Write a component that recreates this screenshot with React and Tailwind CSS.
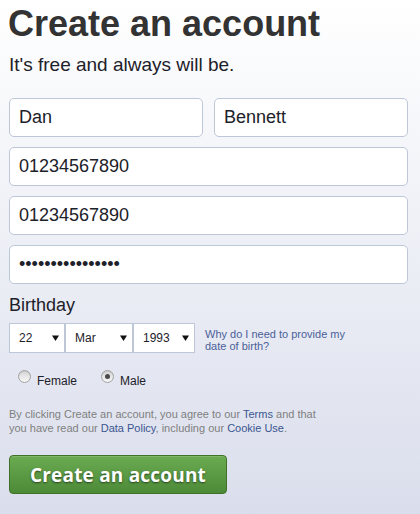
import React from "react";

function Field({ children, className = "" }) {
  return (
    <div
      className={`h-[39px] flex items-center rounded-[5px] border border-[#bdc7d8] bg-white pl-[9px] text-[18px] leading-[20px] text-[#1d2129] ${className}`}
    >
      <span className="pb-[1px]">{children}</span>
    </div>
  );
}

function Arrow() {
  return (
    <svg width="7" height="6" viewBox="0 0 7 6" className="shrink-0">
      <path d="M0 0.5 L7 0.5 L3.5 6 Z" fill="#111" />
    </svg>
  );
}

function Select({ value, width }) {
  return (
    <div
      className={`h-[30px] ${width} flex items-center justify-between border border-[#bdc7d8] bg-white pl-[9px] pr-[5px] text-[12px] text-[#1d2129]`}
    >
      <span>{value}</span>
      <Arrow />
    </div>
  );
}

function Radio({ checked }) {
  return (
    <div className="w-[13px] h-[13px] rounded-full border border-[#a3a3a3] bg-[linear-gradient(to_bottom,#d6d6d6,#f7f7f7)] flex items-center justify-center shadow-[inset_0_1px_1px_rgba(0,0,0,0.08)]">
      {checked && <div className="w-[5px] h-[5px] rounded-full bg-[#4a4a4a]" />}
    </div>
  );
}

export default function App() {
  return (
    <div
      className="w-full h-[514px] overflow-hidden bg-[linear-gradient(to_bottom,#ffffff,#dadeec)] pl-[9px]"
      style={{ fontFamily: '"Liberation Sans", Arial, sans-serif' }}
    >
      <div className="w-[399px] flex flex-col">
        <h1 className="pt-[4px] ml-[-1px] text-[36px] leading-[40px] font-bold text-[#333333]">
          Create an account
        </h1>
        <p className="mt-[10px] text-[19px] leading-[22px] text-[#1d2129]">
          It's free and always will be.
        </p>

        <div className="mt-[22px] flex flex-col gap-[10px]">
          <div className="flex gap-[11px]">
            <Field className="flex-1">Dan</Field>
            <Field className="flex-1">Bennett</Field>
          </div>
          <Field>01234567890</Field>
          <Field>01234567890</Field>
          <Field>
            <span className="tracking-[0px]">{"\u2022".repeat(16)}</span>
          </Field>
        </div>

        <div className="mt-[10px] text-[18px] leading-[22px] text-[#1d2129]">Birthday</div>

        <div className="mt-[7px] flex items-start">
          <Select value="22" width="w-[56px]" />
          <Select value="Mar" width="w-[68px]" />
          <Select value="1993" width="w-[62px]" />
          <div className="ml-[10px] mt-[5px] text-[11px] leading-[12px] text-[#4b5f99] whitespace-nowrap">
            Why do I need to provide my
            <br />
            date of birth?
          </div>
        </div>

        <div className="mt-[17px] ml-[9px] flex items-start text-[12px] leading-[14px] text-[#1d2129]">
          <Radio />
          <span className="ml-[6px] mt-[4px]">Female</span>
          <div className="ml-[24px]">
            <Radio checked />
          </div>
          <span className="ml-[6px] mt-[4px]">Male</span>
        </div>

        <p className="mt-[19px] text-[11px] leading-[14px] text-[#7f7f7f]">
          By clicking Create an account, you agree to our{" "}
          <span className="text-[#3b5590]">Terms</span> and that
          <br />
          you have read our <span className="text-[#3b5590]">Data Policy</span>, including our{" "}
          <span className="text-[#3b5590]">Cookie Use</span>.
        </p>

        <div className="mt-[20px]">
          <button
            className="w-[218px] h-[39px] rounded-[4px] border border-[#3f7228] bg-[linear-gradient(to_bottom,#6aab51,#4d8a38)] text-white font-bold text-[19px] leading-[22px] [text-shadow:0_1px_2px_rgba(0,0,0,0.55)] shadow-[inset_0_1px_0_rgba(255,255,255,0.15)] tracking-[0.2px]"
            style={{ fontFamily: '"Open Sans", "Liberation Sans", sans-serif' }}
          >
            Create an account
          </button>
        </div>
      </div>
    </div>
  );
}
